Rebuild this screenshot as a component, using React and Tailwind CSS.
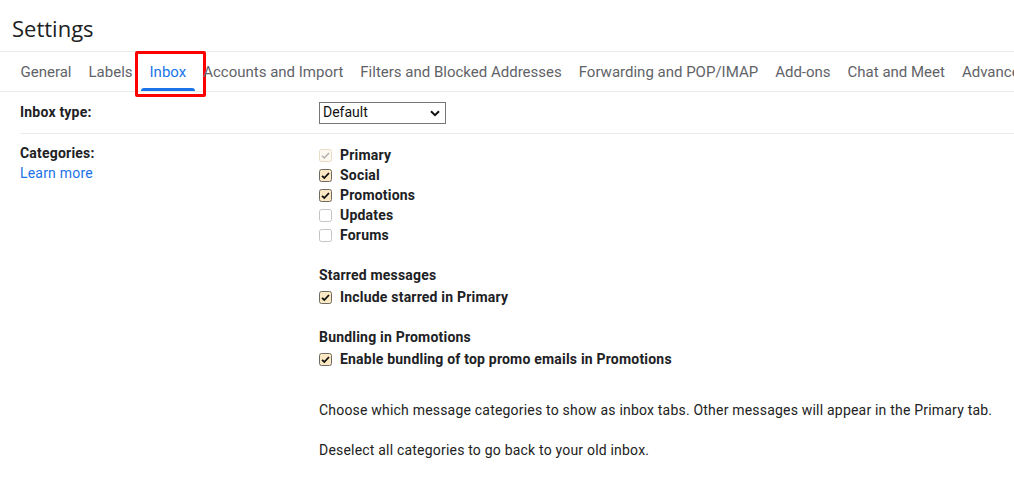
import React from "react";

const tabs = [
  "General",
  "Labels",
  "Inbox",
  "Accounts and Import",
  "Filters and Blocked Addresses",
  "Forwarding and POP/IMAP",
  "Add-ons",
  "Chat and Meet",
  "Advanced",
];

function Box({ state }) {
  if (state === "disabled") {
    return (
      <svg width="13" height="13" viewBox="0 0 13 13" className="shrink-0">
        <rect x="0.5" y="0.5" width="12" height="12" rx="2" fill="#fdf9f0" stroke="#e8dcc4" />
        <path d="M3 6.8 L5.3 9 L10 4" fill="none" stroke="#b0b0b0" strokeWidth="1.5" />
      </svg>
    );
  }
  if (state === "checked") {
    return (
      <svg width="13" height="13" viewBox="0 0 13 13" className="shrink-0">
        <rect x="0.5" y="0.5" width="12" height="12" rx="2" fill="#fbe9c3" stroke="#6e6a62" />
        <path d="M3 6.8 L5.3 9 L10 4" fill="none" stroke="#111" strokeWidth="1.8" />
      </svg>
    );
  }
  return (
    <svg width="13" height="13" viewBox="0 0 13 13" className="shrink-0">
      <rect x="0.5" y="0.5" width="12" height="12" rx="2" fill="#fff" stroke="#c4c4c4" />
    </svg>
  );
}

function Check({ state, children }) {
  return (
    <div className="flex h-5 items-center">
      <Box state={state} />
      <span className="ml-[8px] font-bold text-[#202124]">{children}</span>
    </div>
  );
}

export default function App() {
  return (
    <div
      className="h-[492px] w-[1014px] overflow-hidden bg-white text-[14px] tracking-[0.2px] text-[#202124]"
      style={{ fontFamily: "Roboto, 'Liberation Sans', sans-serif" }}
    >
      <div className="flex h-[52px] items-center border-b border-[#ebebeb] pl-[12px] pt-[4px]">
        <h1 className="text-[22px] leading-[28px] tracking-normal text-[#202124]" style={{ fontFamily: "'Open Sans', Roboto, sans-serif" }}>
          Settings
        </h1>
      </div>
      <div className="relative z-10 flex h-[40px] items-stretch whitespace-nowrap border-b border-[#ebebeb] pl-[12px] text-[15px] tracking-normal">
        {tabs.map((t) => (
          <div key={t} className="relative flex shrink-0 items-center px-[8.5px] pt-[1px]">
            <span className={t === "Inbox" ? "text-[#1a73e8]" : "text-[#5f6368]"}>{t}</span>
            {t === "Inbox" && (
              <>
                <div className="absolute bottom-0 left-0 right-0 h-[3px] rounded-t-[3px] bg-[#1a73e8]" />
                <div className="absolute -bottom-[6px] -left-[6px] -right-[11px] -top-[1px] rounded-[2px] border-[3px] border-[#ff0000]" />
              </>
            )}
          </div>
        ))}
      </div>
      <div className="pl-5">
        <div className="flex h-[42px] items-center border-b border-[#ebebeb]">
          <div className="w-[299px] font-bold">Inbox type:</div>
          <div className="relative flex h-[22px] w-[127px] items-center border border-[#767676] bg-white pl-[3px] text-[14px] tracking-normal text-[#111]">
            <span>Default</span>
            <svg className="absolute right-[5px] top-[7px]" width="10" height="7" viewBox="0 0 10 7">
              <path d="M1 1.2 L5 5.2 L9 1.2" fill="none" stroke="#111" strokeWidth="2" />
            </svg>
          </div>
        </div>
        <div className="flex">
          <div className="w-[299px] pt-[9px]">
            <div className="h-5 leading-5 font-bold">Categories:</div>
            <div className="h-5 leading-5 text-[#1a73e8]">Learn more</div>
          </div>
          <div className="pt-[11px]">
            <Check state="disabled">Primary</Check>
            <Check state="checked">Social</Check>
            <Check state="checked">Promotions</Check>
            <Check state="none">Updates</Check>
            <Check state="none">Forums</Check>
            <div className="mt-5 h-5 leading-5 font-bold">Starred messages</div>
            <div className="mt-[2px]">
              <Check state="checked">Include starred in Primary</Check>
            </div>
            <div className="mt-5 h-5 leading-5 font-bold">Bundling in Promotions</div>
            <div className="mt-[2px]">
              <Check state="checked">Enable bundling of top promo emails in Promotions</Check>
            </div>
            <div className="mt-[31px] h-5 leading-5 text-[#222]">
              Choose which message categories to show as inbox tabs. Other messages will appear in the Primary tab.
            </div>
            <div className="mt-5 h-5 leading-5 text-[#222]">Deselect all categories to go back to your old inbox.</div>
          </div>
        </div>
      </div>
    </div>
  );
}
